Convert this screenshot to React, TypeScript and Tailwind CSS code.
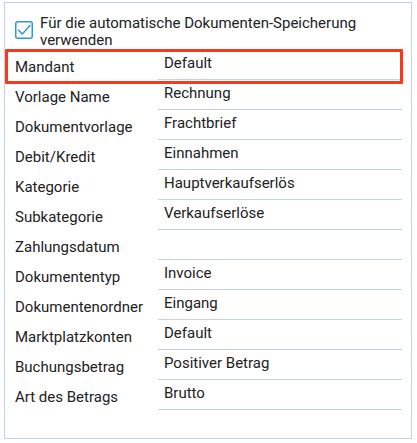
import React from 'react'

const rows: { label: string; value: string }[] = [
  { label: 'Mandant', value: 'Default' },
  { label: 'Vorlage Name', value: 'Rechnung' },
  { label: 'Dokumentvorlage', value: 'Frachtbrief' },
  { label: 'Debit/Kredit', value: 'Einnahmen' },
  { label: 'Kategorie', value: 'Hauptverkaufserlös' },
  { label: 'Subkategorie', value: 'Verkaufserlöse' },
  { label: 'Zahlungsdatum', value: '' },
  { label: 'Dokumententyp', value: 'Invoice' },
  { label: 'Dokumentenordner', value: 'Eingang' },
  { label: 'Marktplatzkonten', value: 'Default' },
  { label: 'Buchungsbetrag', value: 'Positiver Betrag' },
  { label: 'Art des Betrags', value: 'Brutto' },
]

export default function App() {
  return (
    <div className="w-[417px] h-[443px] bg-white pl-[4px] pt-[2px] font-['Roboto',sans-serif] text-[15px] text-[#222222]">
      <div className="w-[408px] h-[437px] border border-[#bcd5e1] pl-[10px] pr-[9px] pt-[12px]">
        {/* checkbox */}
        <div className="flex">
          <div className="mt-[6px] w-[18px] h-[18px] shrink-0">
            <svg viewBox="0 0 18 18" className="w-[18px] h-[18px]">
              <rect x="0.75" y="0.75" width="16.5" height="16.5" rx="2" fill="white" stroke="#2b9bd7" strokeWidth="1.5" />
              <path d="M3.5 9 L7.3 13 L15 4.5" fill="none" stroke="#2b9bd7" strokeWidth="1.5" strokeLinecap="round" strokeLinejoin="round" />
            </svg>
          </div>
          <div className="ml-[7px] leading-[17px]">
            Für die automatische Dokumenten-Speicherung
            <br />
            verwenden
          </div>
        </div>

        {/* fields */}
        <div className="mt-[1px]">
          {rows.map((row, i) => (
            <div key={row.label} className="relative flex h-[30px]">
              <div className="w-[143px] pt-[7px] leading-[20px] whitespace-nowrap">{row.label}</div>
              <div className="flex-1 border-b border-[#c3d4dc] pl-[6px] pt-[3px] leading-[20px]">{row.value}</div>
              {i === 0 && (
                <div className="absolute left-[-10px] right-[-1px] top-[-1px] bottom-[-4px] border-[3px] border-[#f73a1c] rounded-[1px] pointer-events-none" />
              )}
            </div>
          ))}
        </div>
      </div>
    </div>
  )
}
